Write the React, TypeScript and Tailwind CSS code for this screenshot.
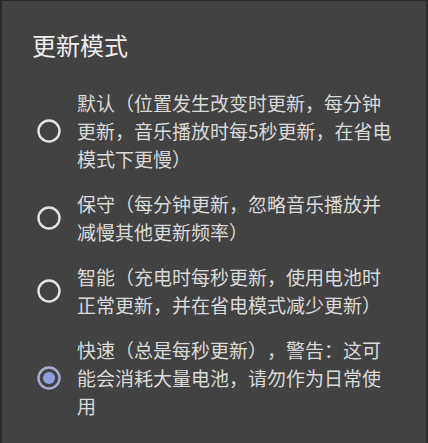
const options = [
  { label: "默认（位置发生改变时更新，每分钟更新，音乐播放时每5秒更新，在省电模式下更慢）", selected: false },
  { label: "保守（每分钟更新，忽略音乐播放并减慢其他更新频率）", selected: false },
  { label: "智能（充电时每秒更新，使用电池时正常更新，并在省电模式减少更新）", selected: false },
  { label: "快速（总是每秒更新），警告：这可能会消耗大量电池，请勿作为日常使用", selected: true },
];

function Radio({ selected }: { selected: boolean }) {
  if (selected) {
    return (
      <svg width="24" height="24" viewBox="0 0 24 24" className="shrink-0">
        <circle cx="12" cy="12" r="10.5" fill="none" stroke="#a9add4" strokeWidth="2.4" />
        <circle cx="12" cy="12" r="6" fill="#8d9fe0" />
      </svg>
    );
  }
  return (
    <svg width="24" height="24" viewBox="0 0 24 24" className="shrink-0">
      <circle cx="12" cy="12" r="10.5" fill="none" stroke="#e2e2e2" strokeWidth="2.4" />
    </svg>
  );
}

export default function App() {
  return (
    <div
      className="w-[428px] h-[443px] bg-[#424242] border-x-2 border-t border-[#2a2a2a] overflow-hidden [text-spacing-trim:space-all]"
      style={{ fontFamily: '"Noto Sans CJK SC", "Noto Sans", sans-serif' }}
    >
      <h2 className="pt-7 pl-[30px] text-[24px] leading-[32px] text-[#eeeeee] mb-7">更新模式</h2>
      <ul className="flex flex-col gap-[17px] pl-[35px]">
        {options.map((o) => (
          <li key={o.label} className="flex items-center gap-4">
            <Radio selected={o.selected} />
            <span className="w-[318px] text-[19px] leading-[28px] text-[#dadada]">{o.label}</span>
          </li>
        ))}
      </ul>
    </div>
  );
}
